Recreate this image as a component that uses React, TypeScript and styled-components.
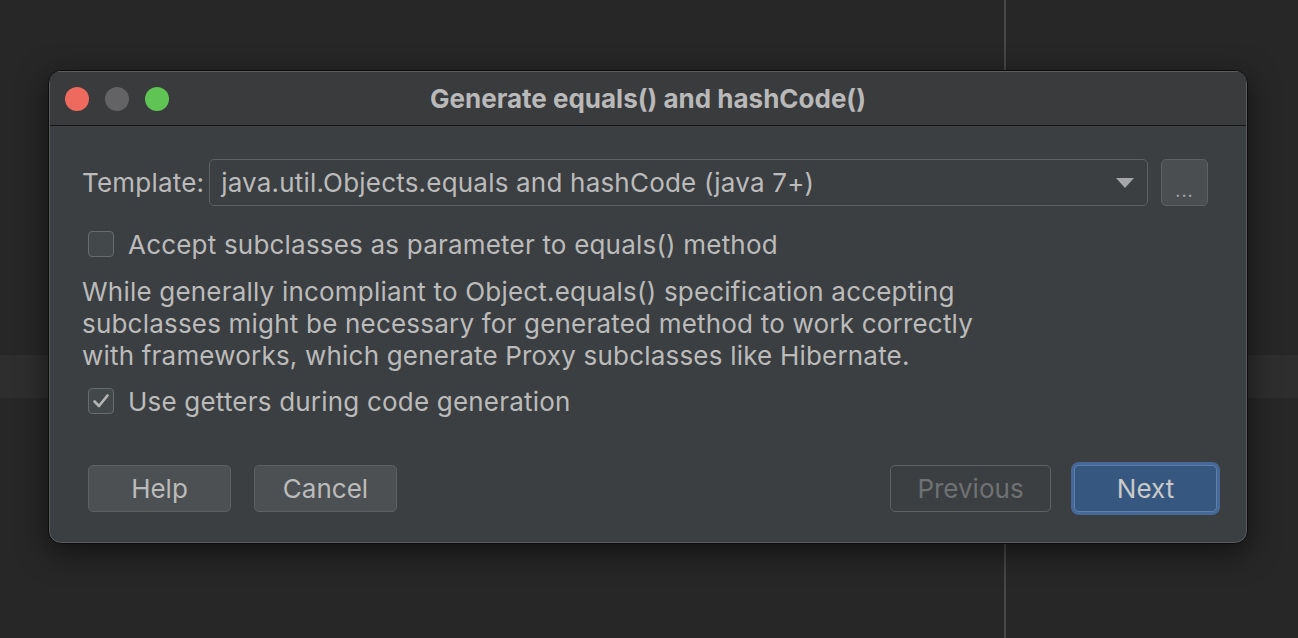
import React from "react";
import styled, { createGlobalStyle } from "styled-components";

const Global = createGlobalStyle`
  html, body { margin: 0; padding: 0; }
  body {
    width: 1298px;
    height: 638px;
    overflow: hidden;
    font-family: Inter, "Noto Sans", sans-serif;
    background:
      linear-gradient(to right, transparent 1004px, #474747 1004px, #474747 1006px, transparent 1006px),
      linear-gradient(to bottom, #272727 0, #272727 355px, #2e2e2e 355px, #2e2e2e 398px, #272727 398px);
  }
`;

const Desktop = styled.div`
  height: 638px;
  box-sizing: border-box;
  padding: 70px 50px 0 48px;
`;

const Window = styled.div`
  width: 1200px;
  height: 474px;
  box-sizing: border-box;
  border: 1px solid #0c0c0c;
  border-radius: 13px;
  background: #3c3f41;
  box-shadow: inset 0 0 0 1px #5c5d5f, 0 8px 30px rgba(0, 0, 0, 0.55);
  overflow: hidden;
  display: flex;
  flex-direction: column;
`;

const TitleBar = styled.div`
  height: 53px;
  flex: none;
  display: flex;
  align-items: center;
  padding-left: 15px;
  position: relative;
  background: #3a3b3d;
  border-top: 1px solid #5c5d5f;
  border-bottom: 1px solid #161616;
  margin: 0 1px;
`;

const Lights = styled.div`
  display: flex;
  gap: 16px;
  position: relative;
  z-index: 1;
`;

const Light = styled.span<{ $c: string }>`
  width: 24px;
  height: 24px;
  border-radius: 50%;
  background: ${(p) => p.$c};
`;

const Title = styled.div`
  position: absolute;
  left: 0;
  right: 0;
  top: 0;
  bottom: 0;
  display: flex;
  align-items: center;
  justify-content: center;
  font-weight: 700;
  font-size: 26px;
  color: #b9b9b9;
`;

const Content = styled.div`
  flex: 1;
  display: flex;
  flex-direction: column;
  padding: 33px 39px 0 33px;
  color: #bbbbbb;
  font-size: 26px;
  letter-spacing: 0.2px;
`;

const TemplateRow = styled.div`
  display: flex;
  align-items: center;
  height: 47px;
`;

const Label = styled.span`
  margin-right: 5px;
`;

const Combo = styled.div`
  flex: 1;
  height: 47px;
  box-sizing: border-box;
  border: 1px solid #5e6162;
  border-radius: 5px;
  display: flex;
  align-items: center;
  padding: 0 13px 0 11px;
`;

const ComboText = styled.span`
  flex: 1;
`;

const Ellipsis = styled.button`
  margin-left: 13px;
  width: 47px;
  height: 47px;
  box-sizing: border-box;
  border: 1px solid #5e6162;
  border-radius: 5px;
  background: #4b4e50;
  color: #a8a8a8;
  font: inherit;
  font-size: 18px;
  padding: 0 0 4px;
  display: flex;
  align-items: flex-end;
  justify-content: center;
  letter-spacing: 1px;
`;

const CheckRow = styled.label<{ $mt: number }>`
  display: flex;
  align-items: center;
  height: 32px;
  margin-top: ${(p) => p.$mt}px;
  padding-left: 6px;
`;

const Box = styled.span`
  width: 26px;
  height: 26px;
  box-sizing: border-box;
  border: 1px solid #686b6c;
  border-radius: 4px;
  background: #43494a;
  margin-right: 14px;
  display: flex;
  align-items: center;
  justify-content: center;
`;

const Paragraph = styled.p`
  margin: 16px 0 0;
  line-height: 32px;
`;

const Buttons = styled.div`
  display: flex;
  align-items: center;
  margin-top: 48px;
  padding-left: 6px;
  margin-right: -9px;
`;

const Btn = styled.button<{ $w: number; $variant?: "default" | "disabled" | "primary" }>`
  width: ${(p) => p.$w}px;
  height: 47px;
  box-sizing: border-box;
  border-radius: 5px;
  font: inherit;
  font-size: 26px;
  padding: 0;
  margin-right: 23px;
  border: 1px solid
    ${(p) => (p.$variant === "primary" ? "#5d80aa" : "#5e6162")};
  background: ${(p) =>
    p.$variant === "primary" ? "#365880" : p.$variant === "disabled" ? "transparent" : "#4c5052"};
  color: ${(p) =>
    p.$variant === "disabled" ? "#6f7173" : p.$variant === "primary" ? "#c9c9c9" : "#bbbbbb"};
  box-shadow: ${(p) => (p.$variant === "primary" ? "0 0 0 3px #46699a" : "none")};
  &:last-child { margin-right: 0; }
`;

const Spacer = styled.div`
  flex: 1;
`;

export default function App() {
  return (
    <>
      <Global />
      <Desktop>
        <Window>
          <TitleBar>
            <Lights>
              <Light $c="#ee6a5f" />
              <Light $c="#636366" />
              <Light $c="#5fc454" />
            </Lights>
            <Title>Generate equals() and hashCode()</Title>
          </TitleBar>
          <Content>
            <TemplateRow>
              <Label>Template:</Label>
              <Combo>
                <ComboText>java.util.Objects.equals and hashCode (java 7+)</ComboText>
                <svg width="18" height="10" viewBox="0 0 18 10">
                  <path d="M0 0 H18 L9 10 Z" fill="#a4a6a8" />
                </svg>
              </Combo>
              <Ellipsis>...</Ellipsis>
            </TemplateRow>
            <CheckRow $mt={22}>
              <Box />
              Accept subclasses as parameter to equals() method
            </CheckRow>
            <Paragraph>
              While generally incompliant to Object.equals() specification accepting
              <br />
              subclasses might be necessary for generated method to work correctly
              <br />
              with frameworks, which generate Proxy subclasses like Hibernate.
            </Paragraph>
            <CheckRow $mt={13}>
              <Box>
                <svg width="18" height="16" viewBox="0 0 18 16">
                  <path
                    d="M2.5 8.5 L7 13 L15.5 2.5"
                    fill="none"
                    stroke="#b4b4b4"
                    strokeWidth="2.6"
                    strokeLinecap="round"
                    strokeLinejoin="round"
                  />
                </svg>
              </Box>
              Use getters during code generation
            </CheckRow>
            <Buttons>
              <Btn $w={143}>Help</Btn>
              <Btn $w={143}>Cancel</Btn>
              <Spacer />
              <Btn $w={161} $variant="disabled">Previous</Btn>
              <Btn $w={143} $variant="primary">Next</Btn>
            </Buttons>
          </Content>
        </Window>
      </Desktop>
    </>
  );
}
